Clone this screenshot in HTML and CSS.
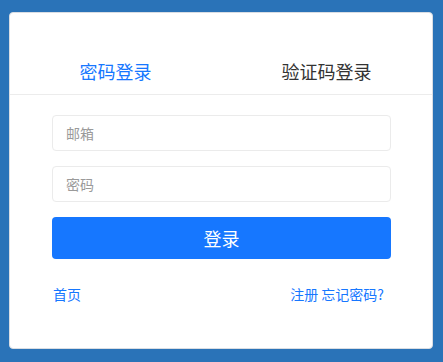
FILE: index.html
```html
<!DOCTYPE html>
<html lang="zh-CN">
<head>
    <meta charset="UTF-8">
    <title>登录</title>
    <link rel="stylesheet" href="styles.css">
</head>
<body>
    <div class="login-card">
        <div class="tabs">
            <div class="tab tab-active">密码登录</div>
            <div class="tab">验证码登录</div>
        </div>

        <form class="login-form">
            <input type="text" class="login-input" placeholder="邮箱">
            <input type="password" class="login-input" placeholder="密码">
            <button type="submit" class="login-btn">登录</button>
        </form>

        <div class="links">
            <a href="#">首页</a>
            <span class="links-right">
                <a href="#">注册</a>
                <a href="#">忘记密码?</a>
            </span>
        </div>
    </div>
</body>
</html>
```

FILE: styles.css
```css
html, body {
    margin: 0;
    padding: 0;
    height: 100%;
}

body {
    font-family: "Noto Sans CJK SC", "Noto Sans", sans-serif;
    background-color: #2a73b8;
    padding: 12px 10px 0 9px;
    box-sizing: border-box;
    overflow: hidden;
}

.login-card {
    width: 424px;
    height: 337px;
    box-sizing: border-box;
    background-color: #ffffff;
    border: 1px solid #d9dde3;
    border-radius: 4px;
}

.tabs {
    display: flex;
    padding: 46px 0 11px 0;
    border-bottom: 1px solid #ececec;
}

    .tab {
        flex: 1;
        text-align: center;
        font-size: 18px;
        line-height: 24px;
        color: #333333;
        cursor: pointer;
    }

    .tab-active {
        color: #1677ff;
    }

.login-form {
    display: flex;
    flex-direction: column;
    gap: 15px;
    padding: 20px 41px 0 42px;
}

.login-input {
    height: 36px;
    padding: 0 13px;
    border: 1px solid #ebebeb;
    border-radius: 4px;
    box-sizing: border-box;
    font-family: inherit;
    font-size: 14px;
    color: #333;
    outline: none;
}

    .login-input::placeholder {
        color: #9a9a9a;
    }

.login-btn {
    height: 42px;
    border: none;
    border-radius: 4px;
    background-color: #1677ff;
    color: #ffffff;
    font-family: inherit;
    font-size: 18px;
    cursor: pointer;
}

.links {
    display: flex;
    justify-content: space-between;
    padding: 24px 48px 0 43px;
    font-size: 14px;
    line-height: 22px;
}

    .links a {
        color: #1677ff;
        text-decoration: none;
    }
```
